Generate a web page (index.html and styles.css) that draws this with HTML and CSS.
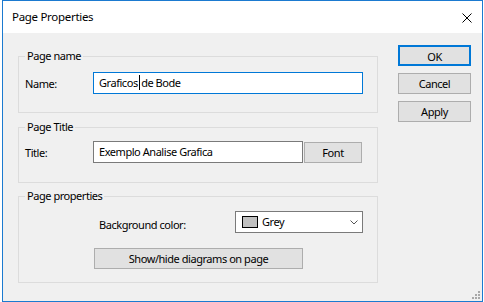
FILE: index.html
```html
<!DOCTYPE html>
<html lang="en">
<head>
  <meta charset="UTF-8" />
  <title>Page Properties</title>
  <link rel="stylesheet" href="styles.css">
</head>
<body>
  <div class="window">
    <div class="titlebar">
      <span class="title">Page Properties</span>
      <svg class="close" width="10" height="10" viewBox="0 0 10 10">
        <path d="M0.5 0.5 L9.5 9.5 M9.5 0.5 L0.5 9.5" stroke="#000" stroke-width="1" fill="none"/>
      </svg>
    </div>

    <div class="content">
      <div class="groups">
        <div class="group group-name">
          <span class="legend">Page name</span>
          <div class="row">
            <span class="label">Name:</span>
            <div class="field field-focus name-field">Graficos<span class="caret"></span> de Bode</div>
          </div>
        </div>

        <div class="group group-title">
          <span class="legend">Page Title</span>
          <div class="row">
            <span class="label">Title:</span>
            <div class="field title-field">Exemplo Analise Grafica</div>
            <button class="btn font-btn">Font</button>
          </div>
        </div>

        <div class="group group-props">
          <span class="legend">Page properties</span>
          <div class="row props-row">
            <span class="bg-label">Background color:</span>
            <div class="field select">
              <span class="swatch"></span>
              <span class="select-text">Grey</span>
              <svg class="chevron" width="8" height="5" viewBox="0 0 8 5">
                <path d="M0.5 0.5 L4 4 L7.5 0.5" stroke="#555" stroke-width="1" fill="none"/>
              </svg>
            </div>
          </div>
          <button class="btn showhide-btn">Show/hide diagrams on page</button>
        </div>
      </div>

      <div class="buttons">
        <button class="btn btn-default">OK</button>
        <button class="btn">Cancel</button>
        <button class="btn">Apply</button>
      </div>

      <svg class="grip" width="9" height="9" viewBox="0 0 9 9">
        <rect x="6" y="0" width="2" height="2" fill="#a8a8a8"/>
        <rect x="3" y="3" width="2" height="2" fill="#a8a8a8"/>
        <rect x="6" y="3" width="2" height="2" fill="#a8a8a8"/>
        <rect x="0" y="6" width="2" height="2" fill="#a8a8a8"/>
        <rect x="3" y="6" width="2" height="2" fill="#a8a8a8"/>
        <rect x="6" y="6" width="2" height="2" fill="#a8a8a8"/>
      </svg>
    </div>
  </div>
</body>
</html>
```

FILE: styles.css
```css
* {
  margin: 0;
  padding: 0;
  box-sizing: border-box;
}

body {
  font-family: "Noto Sans", "Open Sans", sans-serif;
  font-size: 11px;
  letter-spacing: -0.45px;
  color: #000;
  background: #fff;
}

.window {
  width: 481px;
  height: 302px;
  margin-left: 2px;
  border: 1px solid #1b7ad0;
  display: flex;
  flex-direction: column;
}

/* title bar */
.titlebar {
  height: 32px;
  background: #fff;
  display: flex;
  align-items: center;
  justify-content: space-between;
  padding: 0 10px 0 9px;
}

.title {
  font-size: 11.5px;
  line-height: 32px;
  letter-spacing: -0.3px;
}

.close {
  display: block;
  margin-top: 1px;
}

/* dialog body */
.content {
  flex: 1;
  background: #f0f0f0;
  display: flex;
  padding: 12px 0 0 15px;
  position: relative;
}

.groups {
  width: 360px;
  margin-top: 11px;
}

.group {
  position: relative;
  border: 1px solid #dcdcdc;
  padding: 0 14px 0 6px;
}

.legend {
  position: absolute;
  top: -9px;
  left: 6px;
  padding: 0 2px;
  background: #f0f0f0;
  line-height: 16px;
}

.group-name {
  padding-top: 15px;
  padding-bottom: 18px;
}

.group-title {
  margin-top: 14px;
  padding-top: 13px;
  padding-bottom: 19px;
}

.group-props {
  margin-top: 13px;
  padding: 14px 14px 13px 75px;
}

.row {
  display: flex;
  align-items: center;
}

.label {
  width: 68px;
}

.field {
  height: 22px;
  background: #fff;
  border: 1px solid #7a7a7a;
  padding: 0 5px;
  line-height: 20px;
  white-space: nowrap;
}

.field-focus {
  border-color: #0078d7;
}

.name-field {
  width: 270px;
}

.title-field {
  width: 210px;
}

.caret {
  display: inline-block;
  width: 1px;
  height: 15px;
  background: #000;
  vertical-align: -3px;
  margin: 0 -1px 0 1px;
}

.props-row {
  justify-content: space-between;
}

.bg-label {
  margin-left: 5px;
  margin-top: 5px;
}

.select {
  width: 128px;
  display: flex;
  align-items: center;
  padding: 0 4px 0 6px;
}

.swatch {
  width: 16px;
  height: 12px;
  background: #c0c0c0;
  border: 1px solid #000;
  margin-right: 4px;
}

.select-text {
  flex: 1;
}

.chevron {
  display: block;
}

/* buttons */
.btn {
  font-family: inherit;
  font-size: 11px;
  letter-spacing: -0.45px;
  color: #000;
  background: #e1e1e1;
  border: 1px solid #adadad;
  height: 21px;
  line-height: 19px;
}

.font-btn {
  width: 58px;
  margin-left: 1px;
  margin-top: 1px;
}

.showhide-btn {
  display: block;
  width: 209px;
  margin-top: 15px;
}

.buttons {
  margin-left: 20px;
  display: flex;
  flex-direction: column;
  gap: 7px;
}

.buttons .btn {
  width: 73px;
}

.btn-default {
  border: 2px solid #0078d7;
}

.grip {
  position: absolute;
  right: 1px;
  bottom: 1px;
}
```
